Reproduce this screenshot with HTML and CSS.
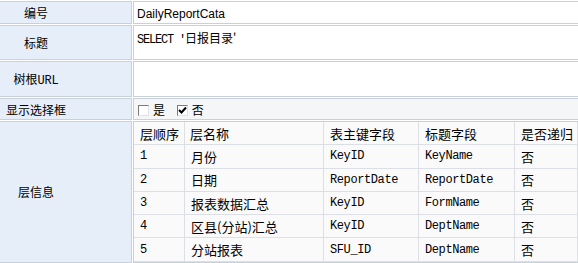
FILE: index.html
```html
<!DOCTYPE html>
<html lang="zh">
<head>
  <meta charset="UTF-8">
  <title>报表目录</title>
  <link rel="stylesheet" href="styles.css">
</head>
<body>

<table class="form">
  <tr class="r-id">
    <td class="label">编号</td>
    <td class="value"><span class="en">DailyReportCata</span></td>
  </tr>
  <tr class="r-title">
    <td class="label">标题</td>
    <td class="value top"><span class="mono sql">SELECT '</span><span class="cn">日报目录'</span></td>
  </tr>
  <tr class="r-url">
    <td class="label">树根<span class="mono url">URL</span></td>
    <td class="value"></td>
  </tr>
  <tr class="r-chk">
    <td class="label">显示选择框</td>
    <td class="value grey">
      <span class="chk"></span><span class="chk-text">是</span>
      <span class="chk checked"><svg width="9" height="9" viewBox="0 0 9 9"><path d="M1 4 L3.5 6.5 L8 1.5" stroke="#000" stroke-width="2" fill="none"/></svg></span><span class="chk-text">否</span>
    </td>
  </tr>
  <tr class="r-layer">
    <td class="label">层信息</td>
    <td class="value inner">
      <table class="layers">
        <tr>
          <td class="c1">层顺序</td>
          <td class="c2">层名称</td>
          <td class="c3">表主键字段</td>
          <td class="c4">标题字段</td>
          <td class="c5">是否递归</td>
        </tr>
        <tr>
          <td class="mono">1</td><td>月份</td><td class="mono">KeyID</td><td class="mono">KeyName</td><td>否</td>
        </tr>
        <tr>
          <td class="mono">2</td><td>日期</td><td class="mono">ReportDate</td><td class="mono">ReportDate</td><td>否</td>
        </tr>
        <tr>
          <td class="mono">3</td><td>报表数据汇总</td><td class="mono">KeyID</td><td class="mono">FormName</td><td>否</td>
        </tr>
        <tr>
          <td class="mono">4</td><td>区县(分站)汇总</td><td class="mono">KeyID</td><td class="mono">DeptName</td><td>否</td>
        </tr>
        <tr>
          <td class="mono">5</td><td>分站报表</td><td class="mono">SFU_ID</td><td class="mono">DeptName</td><td>否</td>
        </tr>
      </table>
    </td>
  </tr>
</table>

</body>
</html>
```

FILE: styles.css
```css
body { margin: 0; overflow: hidden; background: #fff; font-family: "Noto Sans CJK SC", sans-serif; font-size: 12px; color: #000; }
.form { border-collapse: separate; border-spacing: 1px; margin-left: -2px; width: 582px; }
.form td { border: 1px solid #c8d0d9; padding: 0; }
.form .label { width: 72px; padding-right: 59px; background: #e6eef9; text-align: center; }
.form .value { background: #fff; padding-left: 3px; }
.form .value.top { vertical-align: top; padding-top: 3px; }
.form .value.grey { background: #f5f6f8; padding-left: 4px; }
.form .value.inner { padding: 0; vertical-align: top; }
.r-id td { height: 21px; }
.r-title td { height: 30px; }
.r-url td { height: 34px; }
.r-chk td { height: 20px; }
.en { font-family: "Liberation Sans", sans-serif; font-size: 12px; }
.mono { font-family: "Liberation Mono", monospace; font-size: 12px; letter-spacing: -0.4px; }
.form .mono.sql { font-size: 12px; letter-spacing: -1.2px; white-space: pre; }
.form .mono.url { font-size: 12px; letter-spacing: -0.2px; }
.cn { font-size: 12px; }
.chk { display: inline-block; width: 9px; height: 9px; vertical-align: -1px; background: #fff; border-top: 1px solid #7a7a7a; border-left: 1px solid #7a7a7a; border-right: 1px solid #e2e2e2; border-bottom: 1px solid #e2e2e2; }
.chk svg { display: block; }
.chk-text { margin: 0 9px 0 4px; }
.layers { border-collapse: collapse; width: 100%; font-size: 13px; }
.layers td { border: 1px solid #dcdfe3; border-top: none; border-left: none; background: #fbfafa; height: 22.3px; padding: 0 0 0 6px; white-space: nowrap; }
.layers .c1 { width: 44px; }
.layers .c2 { width: 133px; padding-left: 5px; }
.layers .c3 { width: 88px; }
.layers .c4 { width: 89px; }
```
